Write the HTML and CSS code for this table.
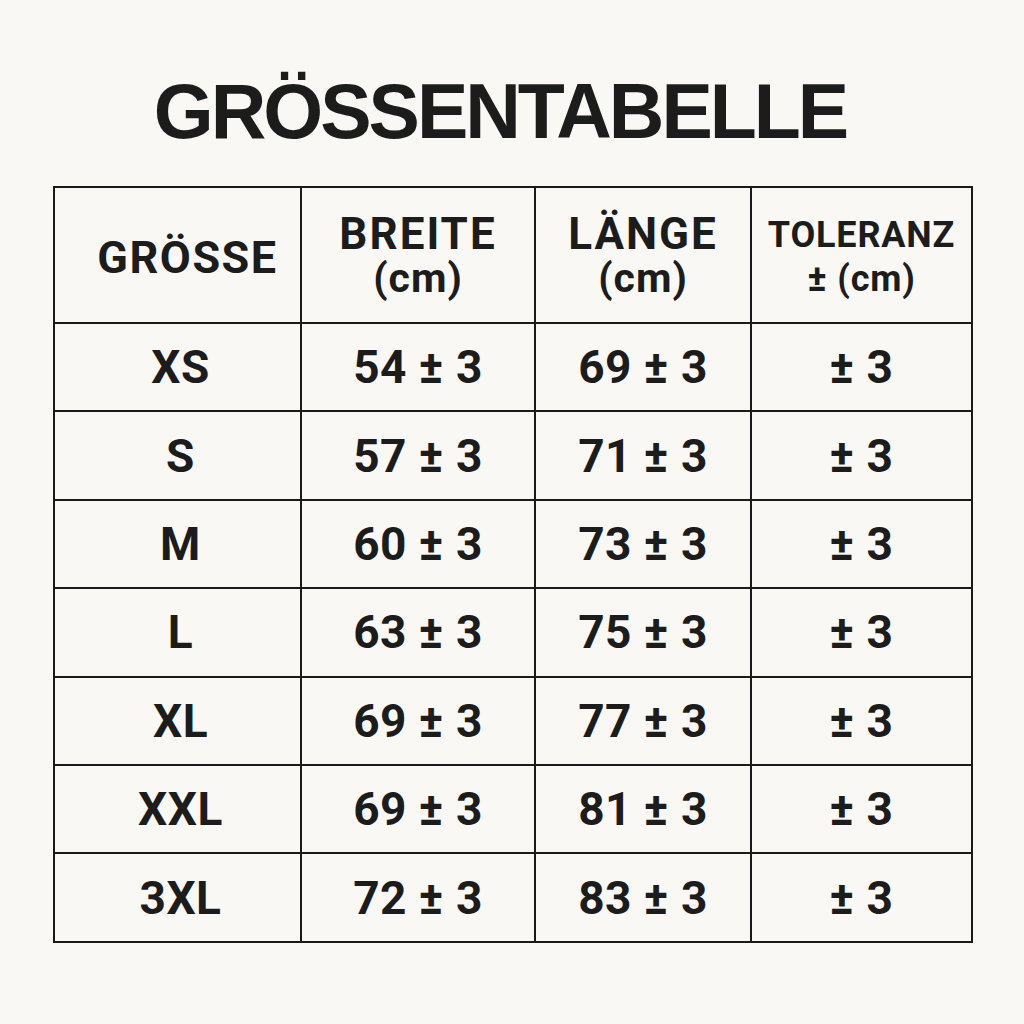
FILE: index.html
```html
<!DOCTYPE html>
<html lang="de">
<head>
<meta charset="utf-8">
<title>Größentabelle</title>
<link rel="stylesheet" href="styles.css">
</head>
<body>
<div class="page">
  <h1 class="title">GRÖSSENTABELLE</h1>
  <table class="sizes">
    <colgroup>
      <col class="c1"><col class="c2"><col class="c3"><col class="c4">
    </colgroup>
    <thead>
      <tr>
        <th class="h-size">GRÖSSE</th>
        <th><span class="hl big">BREITE</span><span class="hl">(cm)</span></th>
        <th><span class="hl big">LÄNGE</span><span class="hl">(cm)</span></th>
        <th class="h-tol"><span class="hl">TOLERANZ</span><span class="hl">± (cm)</span></th>
      </tr>
    </thead>
    <tbody>
      <tr><td>XS</td><td>54 ± 3</td><td>69 ± 3</td><td>± 3</td></tr>
      <tr><td>S</td><td>57 ± 3</td><td>71 ± 3</td><td>± 3</td></tr>
      <tr><td>M</td><td>60 ± 3</td><td>73 ± 3</td><td>± 3</td></tr>
      <tr><td>L</td><td>63 ± 3</td><td>75 ± 3</td><td>± 3</td></tr>
      <tr><td>XL</td><td>69 ± 3</td><td>77 ± 3</td><td>± 3</td></tr>
      <tr><td>XXL</td><td>69 ± 3</td><td>81 ± 3</td><td>± 3</td></tr>
      <tr><td>3XL</td><td>72 ± 3</td><td>83 ± 3</td><td>± 3</td></tr>
    </tbody>
  </table>
</div>
</body>
</html>
```

FILE: styles.css
```css
html, body {
  margin: 0;
  padding: 0;
  background: #f9f8f5;
}

.page {
  width: 1024px;
  height: 1024px;
  box-sizing: border-box;
  padding: 73px 53px 0 53px;
  color: #1c1c1c;
}

.title {
  margin: 0 24px 0 0;
  font-family: "Liberation Sans", Arial, sans-serif;
  font-weight: 700;
  font-size: 77px;
  line-height: 77px;
  letter-spacing: -3px;
  text-align: center;
  color: #1c1c1c;
}

.sizes {
  margin-top: 36px;
  width: 918px;
  border-collapse: collapse;
  table-layout: fixed;
  font-family: Roboto, "Liberation Sans", sans-serif;
  font-weight: 700;
}

.c1 { width: 247px; }
.c2 { width: 234px; }
.c3 { width: 216px; }
.c4 { width: 221px; }

.sizes th,
.sizes td {
  border: 2px solid #1a1a1a;
  padding: 0;
  text-align: center;
  vertical-align: middle;
  color: #1c1c1c;
}

.sizes th {
  height: 132px;
  padding-top: 2px;
  font-size: 41px;
  line-height: 44px;
  letter-spacing: 1px;
}

.sizes th .hl {
  display: block;
}

.sizes th .big {
  font-size: 44px;
  letter-spacing: 2px;
}

.sizes th.h-size {
  height: 128px;
  padding-top: 6px;
  padding-left: 20px;
  font-size: 45px;
  letter-spacing: 1.5px;
}

.sizes th.h-tol {
  height: 130px;
  padding-top: 4px;
  font-size: 36px;
  letter-spacing: 0.8px;
}

.sizes td {
  height: 86.4px;
  font-size: 46px;
  line-height: 50px;
  letter-spacing: 0.5px;
}

.sizes td:first-child {
  padding-left: 6px;
}
```
